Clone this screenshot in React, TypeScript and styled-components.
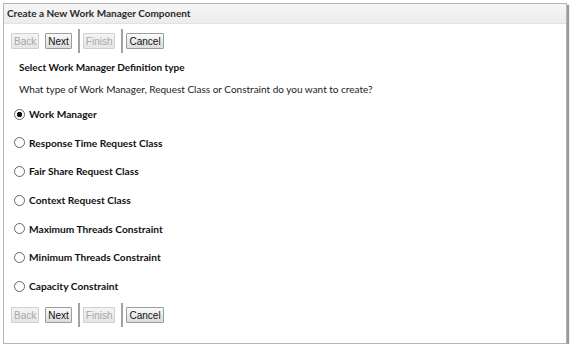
import React from "react";
import styled, { createGlobalStyle } from "styled-components";

const GlobalStyle = createGlobalStyle`
  body {
    margin: 0;
    background: #ffffff;
    font-family: Lato, "DejaVu Sans", sans-serif;
  }
`;

const OPTIONS = [
  "Work Manager",
  "Response Time Request Class",
  "Fair Share Request Class",
  "Context Request Class",
  "Maximum Threads Constraint",
  "Minimum Threads Constraint",
  "Capacity Constraint",
];

const Toolbar: React.FC<{}> = () => {
  return (
    <ToolbarRow>
      <WizardButton disabled>Back</WizardButton>
      <WizardButton>Next</WizardButton>
      <Separator />
      <WizardButton disabled>Finish</WizardButton>
      <Separator />
      <WizardButton>Cancel</WizardButton>
    </ToolbarRow>
  );
};

const App: React.FC<{}> = () => {
  const [selected, setSelected] = React.useState(0);
  return (
    <>
      <GlobalStyle />
      <Panel>
        <Header>Create a New Work Manager Component</Header>
        <Body>
          <Toolbar />
          <Section>
            <SectionTitle>Select Work Manager Definition type</SectionTitle>
            <Question>
              What type of Work Manager, Request Class or Constraint do you want to create?
            </Question>
            <OptionList>
              {OPTIONS.map((label, i) => (
                <Option key={label} onClick={() => setSelected(i)}>
                  <Radio $checked={selected === i} />
                  {label}
                </Option>
              ))}
            </OptionList>
          </Section>
          <Toolbar />
        </Body>
      </Panel>
    </>
  );
};

export default App;

const Panel = styled.div`
  margin: 3px 0 0 3px;
  width: 562px;
  height: 339px;
  border: 1px solid #b5b5b5;
  box-shadow: 2px 2px 1px #9a9a9a;
  background: #fff;
`;

const Header = styled.div`
  height: 19px;
  line-height: 19px;
  padding-left: 3px;
  background: linear-gradient(#f6f6f6, #ececec);
  border-bottom: 1px solid #e2e2e2;
  font-weight: bold;
  font-size: 10px;
  color: #2a2a2a;
`;

const Body = styled.div`
  padding: 5px 0 0 4px;
`;

const ToolbarRow = styled.div`
  display: flex;
  align-items: center;
  height: 24px;
`;

const WizardButton = styled.button`
  height: 16px;
  padding: 0 2px;
  margin: 0 3px;
  font-family: "Liberation Sans", Arial, sans-serif;
  font-size: 10px;
  line-height: 13px;
  color: ${(p) => (p.disabled ? "#a8a8a8" : "#111")};
  background: ${(p) =>
    p.disabled ? "linear-gradient(#f4f4f4, #e6e6e6)" : "linear-gradient(#fbfbfb, #dcdcdc)"};
  border: 1px solid ${(p) => (p.disabled ? "#d0d0d0" : "#9c9c9c")};
  border-radius: 1px;
`;

const Separator = styled.span`
  width: 2px;
  height: 24px;
  margin: 0 0 0 3px;
  background: #a2a2a2;
`;

const Section = styled.div`
  padding: 8px 0 10px 11px;
`;

const SectionTitle = styled.div`
  font-weight: bold;
  font-size: 10px;
  color: #111;
  height: 14px;
`;

const Question = styled.div`
  margin-top: 8px;
  font-size: 10px;
  color: #222;
  height: 14px;
`;

const OptionList = styled.div`
  margin-top: 10px;
  display: flex;
  flex-direction: column;
  gap: 14.7px;
`;

const Option = styled.label`
  display: flex;
  align-items: center;
  gap: 4px;
  margin-left: -5px;
  height: 14px;
  font-weight: bold;
  font-size: 10.2px;
  color: #111;
  cursor: pointer;
`;

const Radio = styled.span<{ $checked: boolean }>`
  width: 9px;
  height: 9px;
  border-radius: 50%;
  border: 1px solid #666;
  background: ${(p) => (p.$checked ? "radial-gradient(circle, #111 0 2.4px, #fff 3px)" : "#fff")};
`;
